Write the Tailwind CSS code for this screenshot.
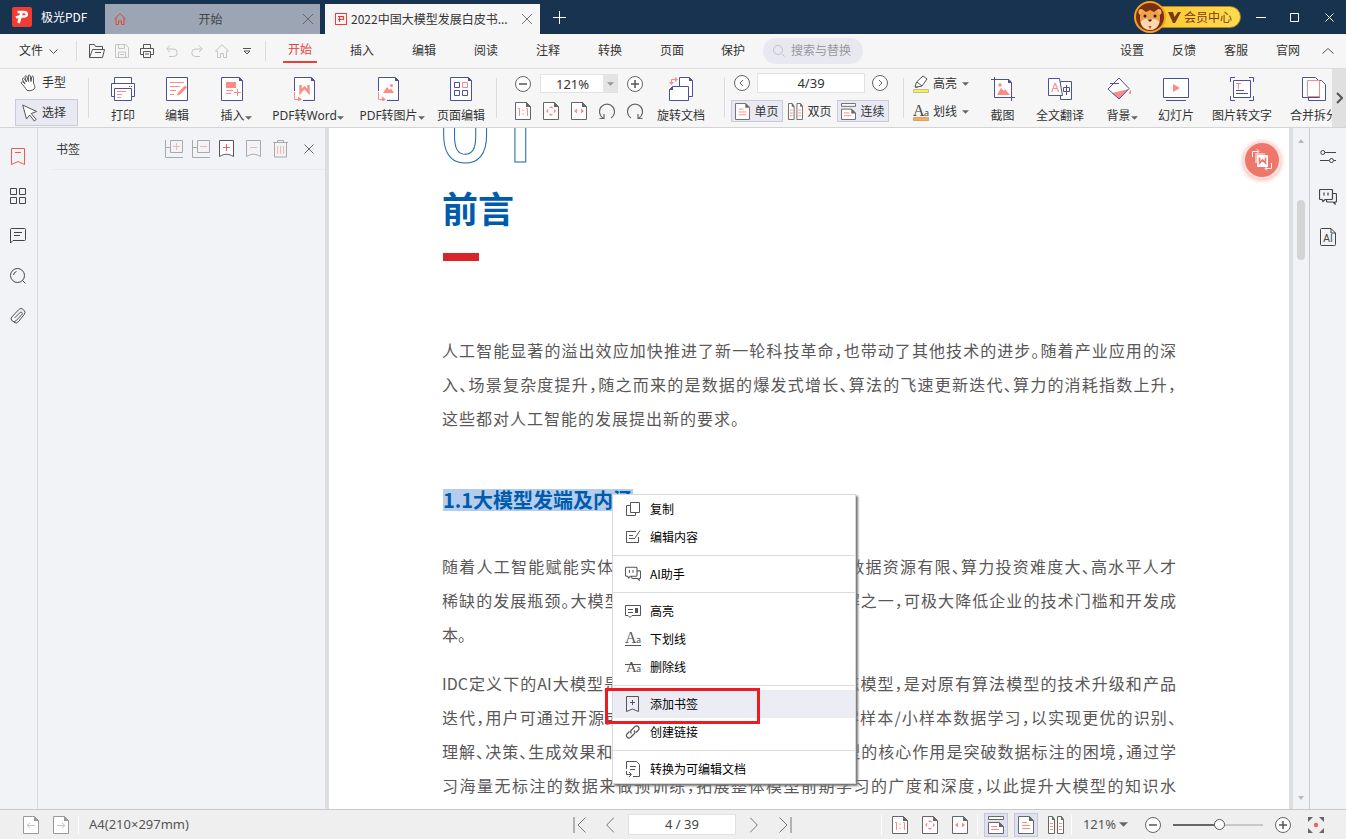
<!DOCTYPE html>
<html lang="zh-CN">
<head>
    <meta charset="UTF-8">
    <meta name="viewport" content="width=device-width, initial-scale=1.0">
    <title>极光PDF</title>
    <script src="https://cdn.jsdelivr.net/npm/@tailwindcss/browser@4"></script>
    <style>
        .ui { font-family: "Noto Sans", "Noto Sans CJK SC", sans-serif; }
        .cjk { font-family: "Noto Sans CJK SC", "Noto Sans", sans-serif; }
        .doc { font-family: "Noto Sans CJK SC", "Noto Sans", sans-serif; font-feature-settings: "halt"; }
        .outline-num { -webkit-text-stroke: 1px #1d66b0; color: transparent; }
        svg { fill: none; flex-shrink: 0; }
        .line { display: block; white-space: nowrap; text-align-last: justify; }
        /* zoom slider */
        .zoom { appearance: none; height: 2px; background: linear-gradient(to right, #666 52%, #c8c8c8 52%); }
        .zoom::-webkit-slider-thumb { appearance: none; width: 11px; height: 11px; border-radius: 50%; background: #fff; border: 1px solid #555; }
    </style>
</head>
<body class="ui flex h-screen flex-col overflow-hidden bg-[#f6f6f6] text-xs text-[#333]">

    <!-- Shared icons -->
    <svg class="hidden">
        <symbol id="i-page" viewBox="0 0 16 18"><path d="M.5 .5h11l4 4v13H.5z" fill="#fff" stroke="#666"/><path d="M11 0l5 5h-5z" fill="#666"/></symbol>
        <symbol id="i-actual" viewBox="0 0 16 18"><use href="#i-page"/><path d="M3 6.500h1.500V14M11 6.500h1.500V14M8 7.500v1.500M8 11.500V13" stroke="#fd8a84"/></symbol>
        <symbol id="i-fit" viewBox="0 0 16 18"><use href="#i-page"/><circle cx="8" cy="9" r="3.500" stroke="#fd8a84" stroke-dasharray="3 2.500" stroke-dashoffset="1.500"/><path d="M8 4l2 2H6zM8 14l2-2H6zM3 9l2-2v4zM13 9l-2-2v4z" fill="#fd8a84"/></symbol>
        <symbol id="i-width" viewBox="0 0 16 18"><use href="#i-page"/><path d="M3 9l3-2.500v5zM13 9l-3-2.500v5z" fill="#fd8a84"/></symbol>
        <symbol id="i-single" viewBox="0 0 16 18"><use href="#i-page"/><path d="M4 6.500h5M4 9.500h8M4 12.500h8" stroke="#fd8a84"/></symbol>
        <symbol id="i-double" viewBox="0 0 16 18"><path d="M.5 .5h4l2 3v14h-6zM9.500 .5h4l2 3v14h-6z" fill="#fff" stroke="#666"/><path d="M4 0l3 4H4zM13 0l3 4h-3z" fill="#666"/><path d="M2 7.500h3M2 10.500h3M2 13.500h3M11 7.500h3M11 10.500h3M11 13.500h3" stroke="#fd8a84"/></symbol>
        <symbol id="i-cont" viewBox="0 0 16 18"><path d="M.5 .5h15v3H.5zM.5 6.500h11l4 4v7H.5z" fill="#fff" stroke="#666"/><path d="M11 6l5 5h-5z" fill="#666"/><path d="M3 10.500h6M3 13.500h8" stroke="#fd8a84"/></symbol>
        <symbol id="i-minus" viewBox="0 0 18 18"><circle cx="9" cy="9" r="7.500" fill="#fff" stroke="#666"/><path d="M5 9h8" stroke="#555" stroke-width="1.500"/></symbol>
        <symbol id="i-plus" viewBox="0 0 18 18"><circle cx="9" cy="9" r="7.500" fill="#fff" stroke="#666"/><path d="M5 9h8M9 5v8" stroke="#555" stroke-width="1.500"/></symbol>
        <symbol id="i-caret" viewBox="0 0 8 4"><path d="M0 0h8L4 4z" fill="#666"/></symbol>
        <symbol id="i-chat" viewBox="0 0 18 16"><path d="M1.500 .5h11a1 1 0 011 1v8a1 1 0 01-1 1H6l-2 2-1-2H1.500a1 1 0 01-1-1v-8a1 1 0 011-1zM5 3.500v3M9 3.500v3M13.500 4.500h3a1 1 0 011 1v6.500a1 1 0 01-1 1h-.5v2l-2-2H8.500a1 1 0 01-1-1v-1.500" stroke="currentColor" stroke-width="1.200"/></symbol>
        <symbol id="i-convert" viewBox="0 0 24 24"><path d="M1 1h17l4 4v17H1z" fill="#fff"/><path d="M1.500 14V.5h17l3 3v20H10" stroke="#4b5196"/><path d="M18 0l4 4h-4z" fill="#4b5196"/><path d="M1.500 15v7.500H6" stroke="#fd8a84"/><path d="M5 19.500l4 3-4 2z" fill="#fd8a84"/></symbol>
    </svg>

    <!-- Title bar -->
    <header class="flex h-[34px] shrink-0 items-end bg-[#18334f]">
        <div class="flex h-full w-[105px] items-center pl-3">
            <svg class="size-5" viewBox="0 0 20 20"><rect width="20" height="20" rx="2" fill="#f03c32"/><path d="M4 10.500c3-1.500 5-1 8-1 3.500 0 4-4.500 0-4.500H5.500" stroke="#fff" stroke-width="2.600"/><path d="M9.500 6L6.500 16" stroke="#fff" stroke-width="2.800"/></svg>
            <span class="cjk ml-[9px] text-white">极光PDF</span>
        </div>
        <div class="cjk mr-[5px] flex h-[30px] w-[215px] items-center bg-[#9ba5b3] pr-[7px] pl-[9px] text-[#444]">
            <svg class="size-3" viewBox="0 0 12 12" stroke="#e5423a"><path d="M.5 6L6 .7 11.500 6M2 5v6.500h2.500V8h3v3.500H10V5"/></svg>
            <span class="flex-1 pr-2 text-center">开始</span>
            <button aria-label="关闭开始"><svg class="size-[10px]" viewBox="0 0 10 10" stroke="#666"><path d="M0 0l10 10M10 0L0 10"/></svg></button>
        </div>
        <div class="cjk flex h-[30px] w-[215px] items-center bg-[#f6f6f6] pr-2 pl-[10px]">
            <svg class="size-3" viewBox="0 0 12 12"><rect x=".5" y=".5" width="11" height="11" stroke="#f03c32"/><path d="M3 6.500h5.500V3.500H3M4.500 4v5" stroke="#f03c32" stroke-width="1.200"/></svg>
            <span class="ml-1 flex-1 whitespace-nowrap">2022中国大模型发展白皮书...</span>
            <button aria-label="关闭文档"><svg class="size-[10px]" viewBox="0 0 10 10" stroke="#777"><path d="M0 0l10 10M10 0L0 10"/></svg></button>
        </div>
        <button class="ml-[13px] flex h-full items-center" aria-label="新建标签"><svg class="size-[13px]" viewBox="0 0 13 13" stroke="#fff"><path d="M6.500 0v13M0 6.500h13"/></svg></button>
        <div class="ml-auto flex h-full items-center pr-3 text-white">
            <button class="cjk relative mr-[15px] flex h-[22px] w-[98px] items-center rounded-full border border-[#b9861d] bg-linear-to-r from-[#fbc62e] to-[#ffdc50] pl-6 text-[#7c3a12]">
                <svg class="absolute -left-[10px] size-8" viewBox="0 0 32 32">
                    <circle cx="16" cy="16" r="15" fill="#7d2f0d" stroke="#f0a51e" stroke-width="2"/>
                    <circle cx="7.500" cy="11" r="3" fill="#f8b25c"/><circle cx="24.500" cy="11" r="3" fill="#f8b25c"/>
                    <path d="M6 17c0-7 4-9 10-9s10 2 10 9-4 12-10 12S6 24 6 17z" fill="#f2a04a"/>
                    <path d="M6.500 21c2-2 5-4 9.500-3 4.500-1 7.500 1 9.500 3-1 5-5 8-9.500 8s-8.500-3-9.500-8z" fill="#fbd9b0"/>
                    <path d="M8 8l4-3 4 3 4-3 4 3-4 3-4-2-4 2z" fill="#7d2f0d"/>
                    <circle cx="11" cy="15" r="1.500" fill="#222"/><circle cx="21" cy="15" r="1.500" fill="#222"/>
                    <path d="M13.500 18.500h5L16 21z" fill="#4a1c08"/><path d="M14.500 25h3L16 28z" fill="#e5322c"/>
                </svg>
                <svg class="mr-[3px] h-[11px] w-[13px]" viewBox="0 0 13 11"><path d="M0 0h5l1.500 5L10 0h3L7 11H5z" fill="#7c3a12"/></svg>
                会员中心
            </button>
            <button class="mr-6" aria-label="最小化"><svg class="size-[10px]" viewBox="0 0 10 10" stroke="#fff"><path d="M0 5.500h10"/></svg></button>
            <button class="mr-[26px]" aria-label="最大化"><svg class="size-[9px]" viewBox="0 0 9 9" stroke="#fff"><path d="M.5 .5h8v8h-8z"/></svg></button>
            <button aria-label="关闭"><svg class="size-[9px]" viewBox="0 0 9 9" stroke="#fff"><path d="M.5 .5l8 8M8.500 .5l-8 8"/></svg></button>
        </div>
    </header>

    <!-- Menu bar -->
    <nav class="flex h-[35px] shrink-0 items-center border-b border-[#dcdcdc] leading-4">
        <button class="ml-[19px] flex items-center gap-[6px]">文件<svg class="h-[5px] w-[9px]" viewBox="0 0 9 5" stroke="#555"><path d="M.5 .5l4 4 4-4"/></svg></button>
        <div class="ml-[18px] h-5 w-px bg-[#dcdcdc]"></div>
        <div class="ml-[7px] flex w-[175px] items-center justify-between">
            <button class="flex w-[25px] justify-center" aria-label="打开"><svg class="size-4" viewBox="0 0 16 16" stroke="#555"><path d="M.5 14.500V1.500h5l1 2h7v3M.5 14.500l3-8h12l-2 8zM6 9.500h6"/></svg></button>
            <button class="flex w-[25px] justify-center" aria-label="保存"><svg class="size-[14px]" viewBox="0 0 14 14" stroke="#c4c4c4"><path d="M.5 .5h10l3 3v10H.5zM3.500 .5v4h6v-4M3.500 13v-5h7v5M5 10.500h4"/></svg></button>
            <button class="flex w-[25px] justify-center" aria-label="打印文件"><svg class="size-[14px]" viewBox="0 0 14 14" stroke="#555"><path d="M3.500 4V.5h7V4M3 10.500H.5v-6h13v6H11M3.500 7.500h7v6h-7zM5 10h4"/></svg></button>
            <button class="flex w-[25px] justify-center" aria-label="撤销"><svg class="size-3" viewBox="0 0 12 12" stroke="#c4c4c4"><path d="M4 .5L.7 4 4 7M1 4h6.500a3.700 3.700 0 010 7.500H3"/></svg></button>
            <button class="flex w-[25px] justify-center" aria-label="重做"><svg class="size-3" viewBox="0 0 12 12" stroke="#c4c4c4"><path d="M8 .5L11.300 4 8 7M11 4H4.500a3.700 3.700 0 000 7.500H9"/></svg></button>
            <button class="flex w-[25px] justify-center" aria-label="主页"><svg class="size-[14px]" viewBox="0 0 14 14" stroke="#c4c4c4"><path d="M.5 7L7 .7 13.500 7H11.500v6.500h-3v-4h-3v4h-3V7z"/></svg></button>
            <button class="flex w-[25px] justify-center" aria-label="更多"><svg class="h-[7px] w-2" viewBox="0 0 8 7" stroke="#555"><path d="M0 .5h8M1 3l3 3 3-3z"/></svg></button>
        </div>
        <div class="ml-[6px] h-5 w-px bg-[#dcdcdc]"></div>
        <div class="ml-[3px] flex h-full items-center">
            <button class="flex w-[62px] justify-center text-[#e5423a]"><span class="w-[34px] border-b-2 border-[#e5423a] pt-[3px] pb-[3px]">开始</span></button>
            <button class="w-[62px]">插入</button>
            <button class="w-[62px]">编辑</button>
            <button class="w-[62px]">阅读</button>
            <button class="w-[62px]">注释</button>
            <button class="w-[62px]">转换</button>
            <button class="w-[62px]">页面</button>
            <button class="w-[60px]">保护</button>
        </div>
        <label class="flex h-[26px] w-[100px] items-center gap-[6px] rounded-full bg-[#e8e8f1] pl-[10px]">
            <svg class="size-3" viewBox="0 0 12 12" stroke="#c0c0c8"><circle cx="5" cy="5" r="4.500"/><path d="M8.500 8.500l3 3"/></svg>
            <input class="w-16 outline-none placeholder:text-[#999]" type="text" placeholder="搜索与替换" aria-label="搜索与替换">
        </label>
        <div class="ml-auto flex items-center pr-3">
            <button class="w-[52px]">设置</button>
            <button class="w-[52px]">反馈</button>
            <button class="w-[52px]">客服</button>
            <button class="w-[52px]">官网</button>
            <button class="ml-2" aria-label="收起"><svg class="h-[6px] w-3" viewBox="0 0 12 6" stroke="#555"><path d="M.5 5.500L6 .5l5.500 5"/></svg></button>
        </div>
    </nav>

    <!-- Ribbon -->
    <section class="flex h-[59px] shrink-0 overflow-hidden border-b border-[#d4d4d4]">
        <div class="flex min-w-0 flex-1 overflow-hidden">
            <div class="ml-[15px] flex w-[63px] shrink-0 flex-col gap-[3px] pt-[1px]">
                <button class="flex h-[26px] items-center gap-1 pl-[5px]">
                    <svg class="size-[18px]" viewBox="0 0 18 18" stroke="#555" stroke-linejoin="round"><path d="M7 16.500C5.500 14 3 11 1.500 9.500c-1-1.200.5-2.200 1.500-1.300l2 1.600L2.500 5.500c-.6-1.300 1-2 1.700-.8L6.500 8 5 3c-.3-1.400 1.300-1.800 1.800-.5L8.500 7.500 8.300 2c0-1.400 1.700-1.400 1.900 0l.8 5.500L11.700 3c.2-1.300 1.700-1.100 1.700.2l.1 5.800c.5 2 2.500 4.500.5 6-1.500 1.500-4 2-7 1.500z" fill="#fff"/></svg>
                    手型
                </button>
                <button class="flex h-[27px] items-center gap-1 border border-[#c9cade] bg-[#e9e9f3] pl-[6px]">
                    <svg class="h-[18px] w-4" viewBox="0 0 16 18"><path d="M.7 1l14 6.500-5.500 2 5 6-2 1.500-4.500-6L4.500 15z" fill="#fff" stroke="#555" stroke-linejoin="round"/></svg>
                    选择
                </button>
            </div>
            <div class="mt-[9px] ml-[10px] h-10 w-px shrink-0 bg-[#dcdcdc]"></div>

            <button class="ml-[7px] flex w-[54px] shrink-0 flex-col items-center pt-2">
                <svg class="size-6" viewBox="0 0 24 24" stroke="#4b5196"><path d="M3.500 6V.5h17V6" fill="#fff"/><path d="M.5 6.500h23v13H.5z" fill="#fff"/><path d="M3.500 11.500h17v12h-17z" fill="#fff"/><path d="M18 9.500h1M20 9.500h1"/><path d="M6 14.500h9M6 17.500h5M6 20.500h4" stroke="#fd8a84"/></svg>
                <span class="mt-[5px] leading-5">打印</span>
            </button>
            <button class="flex w-[54px] shrink-0 flex-col items-center pt-2">
                <svg class="size-6" viewBox="0 0 24 24"><path d="M1.500 .5h21v23h-21z" fill="#fff" stroke="#4b5196"/><path d="M5 5.500h14M5 9.500h10M5 13.500h6M5 17.500h4" stroke="#fd8a84"/><path d="M12 18.500l1-3 7-7 2 2-7 7z" fill="#fd8a84"/></svg>
                <span class="mt-[5px] leading-5">编辑</span>
            </button>
            <button class="flex w-16 shrink-0 flex-col items-center pt-2">
                <svg class="mr-2 size-6" viewBox="0 0 24 24"><path d="M1.500 .5h18l3 3v20h-21z" fill="#fff" stroke="#4b5196"/><path d="M19 0l4 4h-4z" fill="#4b5196"/><path d="M6 5h10v6H6z" fill="#fd8a84"/><path d="M6 13.500h7M6 16.500h5M14 15.500h7M17.500 12v7" stroke="#fd8a84"/></svg>
                <span class="mt-[5px] flex items-center leading-5">插入<svg class="mt-[3px] h-[4px] w-[7px]"><use href="#i-caret"/></svg></span>
            </button>
            <button class="flex w-20 shrink-0 flex-col items-center pt-2">
                <svg class="mr-[6px] size-6" viewBox="0 0 24 24"><use href="#i-convert"/><path d="M7.500 8v7l4-4.500 4 4.500V8" stroke="#fd8a84" stroke-width="2.400"/></svg>
                <span class="mt-[5px] flex items-center whitespace-nowrap leading-5">PDF转Word<svg class="mt-[3px] h-[4px] w-[7px]"><use href="#i-caret"/></svg></span>
            </button>
            <button class="flex w-[88px] shrink-0 flex-col items-center pt-2">
                <svg class="mr-[6px] size-6" viewBox="0 0 24 24"><use href="#i-convert"/><path d="M6 16l4-6 2.500 3 1.500-1.500L17 16z" fill="#fd8a84"/><circle cx="14.500" cy="8.500" r="1.500" fill="#fd8a84"/></svg>
                <span class="mt-[5px] flex items-center whitespace-nowrap leading-5">PDF转图片<svg class="mt-[3px] h-[4px] w-[7px]"><use href="#i-caret"/></svg></span>
            </button>
            <button class="flex w-[50px] shrink-0 flex-col items-center whitespace-nowrap pt-2">
                <svg class="size-6" viewBox="0 0 24 24"><path d="M1.500 .5h18l3 3v20h-21z" fill="#fff" stroke="#4b5196"/><path d="M19 0l4 4h-4z" fill="#4b5196"/><path d="M5.500 5.500h5v5h-5zM5.500 13.500h5v5h-5zM13.500 13.500h5v5h-5z" stroke="#4b5196"/><path d="M13.500 5.500h5v5h-5z" stroke="#fd8a84"/></svg>
                <span class="mt-[5px] leading-5">页面编辑</span>
            </button>
            <div class="mt-[9px] ml-[10px] h-10 w-px shrink-0 bg-[#dcdcdc]"></div>

            <!-- Zoom -->
            <div class="ml-3 flex w-[140px] shrink-0 flex-col gap-[9px] pt-[5px]">
                <div class="flex items-center justify-between px-[5px]">
                    <button aria-label="缩小"><svg class="size-[18px]"><use href="#i-minus"/></svg></button>
                    <div class="relative flex h-[19px] w-[78px] items-center border border-[#e2e2e2] bg-white">
                        <select class="h-full w-full appearance-none pl-[15px] text-[13px] leading-4 outline-none" aria-label="缩放比例"><option>121%</option><option>100%</option></select>
                        <span class="pointer-events-none absolute inset-y-0 right-0 flex w-[14px] items-center justify-center bg-[#e4e4e4]"><svg class="h-[4px] w-[7px] opacity-60"><use href="#i-caret"/></svg></span>
                    </div>
                    <button aria-label="放大"><svg class="size-[18px]"><use href="#i-plus"/></svg></button>
                </div>
                <div class="flex items-center justify-between px-[6px]">
                    <button aria-label="实际大小"><svg class="h-[18px] w-4"><use href="#i-actual"/></svg></button>
                    <button aria-label="适合页面"><svg class="h-[18px] w-4"><use href="#i-fit"/></svg></button>
                    <button aria-label="适合宽度"><svg class="h-[18px] w-4"><use href="#i-width"/></svg></button>
                    <button aria-label="向左旋转"><svg class="h-[18px] w-4" viewBox="0 0 16 18" stroke="#666" stroke-width="1.200"><path d="M12 16a7.500 7.500 0 10-8 0M.5 16.500H5V12"/></svg></button>
                    <button aria-label="向右旋转"><svg class="h-[18px] w-4" viewBox="0 0 16 18" stroke="#666" stroke-width="1.200"><path d="M4 16a7.500 7.500 0 118 0M15.500 16.500H11V12"/></svg></button>
                </div>
            </div>
            <button class="ml-1 flex w-14 shrink-0 flex-col items-center whitespace-nowrap pt-2">
                <svg class="size-6" viewBox="0 0 24 24"><path d="M10.500 .5h10l3 3v16h-13z" fill="#fff" stroke="#4b5196"/><path d="M20 0l4 4h-4z" fill="#4b5196"/><path d="M.5 12.500l3-3h16v14H.5z" fill="#fff" stroke="#4b5196"/><path d="M4 9v4H0z" fill="#4b5196"/><path d="M2.500 7V2.500H7" stroke="#fd8a84"/><path d="M0 5h5l-2.500 3zM6 0v5l3-2.500z" fill="#fd8a84"/></svg>
                <span class="mt-[5px] leading-5">旋转文档</span>
            </button>
            <div class="mt-[9px] ml-[15px] h-10 w-px shrink-0 bg-[#dcdcdc]"></div>

            <!-- Page navigation and view mode -->
            <div class="ml-[6px] flex w-[158px] shrink-0 flex-col gap-[7px] pt-1">
                <div class="flex items-center justify-between pl-[2px]">
                    <button aria-label="上一页"><svg class="size-[18px]" viewBox="0 0 18 18" stroke="#666"><circle cx="9" cy="9" r="7.500" fill="#fff"/><path d="M10 6L7 9l3 3"/></svg></button>
                    <input class="h-5 w-[108px] border border-[#e2e2e2] bg-white text-center text-[13px] outline-none" type="text" value="4/39" aria-label="页码">
                    <button aria-label="下一页"><svg class="size-[18px]" viewBox="0 0 18 18" stroke="#666"><circle cx="9" cy="9" r="7.500" fill="#fff"/><path d="M8 6l3 3-3 3"/></svg></button>
                </div>
                <div class="cjk flex items-center justify-between">
                    <button class="flex h-[22px] w-[52px] items-center justify-center gap-1 border border-[#c9cade] bg-[#e9e9f3]"><svg class="h-[17px] w-[15px]"><use href="#i-single"/></svg>单页</button>
                    <button class="flex h-[22px] w-[48px] items-center justify-center gap-1"><svg class="h-[17px] w-[15px]"><use href="#i-double"/></svg>双页</button>
                    <button class="flex h-[22px] w-[52px] items-center justify-center gap-1 border border-[#c9cade] bg-[#e9e9f3]"><svg class="h-[17px] w-[15px]"><use href="#i-cont"/></svg>连续</button>
                </div>
            </div>
            <div class="mt-[9px] ml-[14px] h-10 w-px shrink-0 bg-[#dcdcdc]"></div>

            <div class="ml-[9px] flex w-[57px] shrink-0 flex-col gap-[10px] pt-[6px]">
                <button class="flex h-[18px] items-center gap-1">
                    <svg class="h-[18px] w-4" viewBox="0 0 16 18"><path d="M2 12l1.500-5L10 1l4 3-5 7-5 1z" fill="#fff" stroke="#555"/><path d="M4 7l5 4M2 12h3" stroke="#555"/><path d="M.5 14.500h15v3H.5z" fill="#fdf23c" stroke="#c0c0a0"/></svg>
                    高亮<svg class="ml-px h-[4px] w-[7px]"><use href="#i-caret"/></svg>
                </button>
                <button class="flex h-[18px] items-center gap-1">
                    <svg class="h-[18px] w-4" viewBox="0 0 16 18"><text x="0" y="13" font-family="Liberation Serif" font-size="16" fill="#444">A</text><text x="11" y="13" font-size="9" fill="#444">a</text><path d="M.5 14.500h15v3H.5z" fill="#ffab4a" stroke="#c9a67c"/></svg>
                    划线<svg class="ml-px h-[4px] w-[7px]"><use href="#i-caret"/></svg>
                </button>
            </div>
            <button class="ml-1 flex w-[57px] shrink-0 flex-col items-center pt-2">
                <svg class="size-6" viewBox="0 0 24 24"><path d="M3.500 2.500h14l3 3v14h-17z" fill="#fff"/><path d="M0 2.500h18l2.500 3V24M3.500 0v20.500H24" stroke="#4b5196"/><path d="M17 2l4 4h-4z" fill="#4b5196"/><path d="M6 18l4-7 3 3 1-2 5 6z" fill="#fd8a84"/><circle cx="9" cy="8" r="1.700" fill="#fd8a84"/></svg>
                <span class="mt-[5px] leading-5">截图</span>
            </button>
            <button class="flex w-[58px] shrink-0 flex-col items-center whitespace-nowrap pt-2">
                <svg class="size-6" viewBox="0 0 24 24"><path d="M12.500 4.500h11v18h-11z" fill="#fff" stroke="#4b5196"/><path d="M.5 1.500h11l3 17H.5z" fill="#fff" stroke="#4b5196"/><text x="3" y="15" font-size="13" fill="#fd8a84">A</text><path d="M15.500 10.500h6v4h-6zM18.500 8v10" stroke="#4b5196"/></svg>
                <span class="mt-[5px] leading-5">全文翻译</span>
            </button>
            <button class="flex w-[66px] shrink-0 flex-col items-center pt-2">
                <svg class="mr-[6px] size-6" viewBox="0 0 24 24"><path d="M1 12L12 1l10 11-10 10z" fill="#fff"/><path d="M5 16l17-4-10 10z" fill="#fd8a84"/><path d="M1 12L12 1l10 10.500L12 22zM3 6.500h9" stroke="#4b5196"/><path d="M23.500 13c1 2 1 4-.5 4s-1-2 .5-4z" fill="#fd8a84"/></svg>
                <span class="mt-[5px] flex items-center leading-5">背景<svg class="mt-[3px] h-[4px] w-[7px]"><use href="#i-caret"/></svg></span>
            </button>
            <button class="flex w-[42px] shrink-0 flex-col items-center whitespace-nowrap pt-2">
                <svg class="h-6 w-[26px]" viewBox="0 0 26 24"><path d="M.5 1.500h25v19H.5z" fill="#fff" stroke="#4b5196"/><path d="M3 23.500h20" stroke="#4b5196"/><path d="M10 7l7 4-7 4z" fill="#fd8a84"/></svg>
                <span class="mt-[5px] leading-5">幻灯片</span>
            </button>
            <button class="flex w-[90px] shrink-0 flex-col items-center whitespace-nowrap pt-2">
                <svg class="size-6" viewBox="0 0 24 24"><path d="M3.500 3.500h17v17h-17z" fill="#fff"/><path d="M.5 5V.5H5M19 .5h4.500V5M23.500 19v4.500H19M5 23.500H.5V19M3.500 3.500h17v17h-17zM6 13.500h8M6 16.500h12" stroke="#4b5196"/><path d="M6 6.500h5M8.500 6v6" stroke="#fd8a84"/></svg>
                <span class="mt-[5px] leading-5">图片转文字</span>
            </button>
            <button class="flex w-[54px] shrink-0 flex-col items-center whitespace-nowrap pt-2">
                <svg class="size-6" viewBox="0 0 24 24"><path d="M6.500 3.500h13l4 4v16h-17z" fill="#fff" stroke="#4b5196"/><path d="M.5 .5h13l4 4v16H.5z" fill="#fff" stroke="#4b5196"/><path d="M5.500 3.500h12v16h-12z" stroke="#fd8a84"/></svg>
                <span class="mt-[5px] leading-5">合并拆分</span>
            </button>
        </div>
        <button class="flex w-[14px] shrink-0 items-center justify-center bg-[#e0e0e0]" aria-label="更多工具"><svg class="h-3 w-[7px]" viewBox="0 0 7 12" stroke="#555" stroke-width="2"><path d="M1 1l5 5-5 5"/></svg></button>
    </section>

    <!-- Workspace -->
    <div class="flex min-h-0 flex-1 bg-[#f2f3f6]">
        <aside class="flex w-[38px] shrink-0 flex-col border-r border-[#d8d9db] pt-2 text-[#444]">
            <button class="flex h-10 items-center justify-center pr-[2px]" aria-label="书签"><svg class="h-[17px] w-[14px]" viewBox="0 0 14 17" stroke="#f05a50"><path d="M.5 .5h13v16L7 13.500.5 16.500zM4 4.500h6"/></svg></button>
            <button class="flex h-10 items-center justify-center pr-[2px]" aria-label="缩略图"><svg class="size-4" viewBox="0 0 16 16" stroke="currentColor"><path d="M.5 .5h6v6h-6zM9.500 .5h6v6h-6zM.5 9.500h6v6h-6zM9.500 9.500h6v6h-6z"/></svg></button>
            <button class="flex h-10 items-center justify-center pr-[2px]" aria-label="注释列表"><svg class="size-4" viewBox="0 0 16 16" stroke="currentColor"><path d="M.5 15V1.500a1 1 0 011-1h13a1 1 0 011 1v10a1 1 0 01-1 1H3zM4 4.500h8M4 7.500h6"/></svg></button>
            <button class="flex h-10 items-center justify-center pr-[2px]" aria-label="查找"><svg class="size-4" viewBox="0 0 16 16" stroke="currentColor"><circle cx="7.500" cy="7.500" r="7"/><path d="M12.500 12.500l3 3M3.500 7a4 4 0 013-3.500"/></svg></button>
            <button class="flex h-10 items-center justify-center pr-[2px]" aria-label="附件"><svg class="size-4" viewBox="0 0 16 17" stroke="currentColor"><path d="M4.500 10.500l6-6a1.500 1.500 0 012 2l-6.500 7a3 3 0 01-4.500-4l7-7.500a3.500 3.500 0 015.500 0 3.500 3.500 0 01.5 5l-6 7.500a3.500 3.500 0 01-5 .5"/></svg></button>
        </aside>

        <!-- Bookmark panel -->
        <aside class="w-[287px] shrink-0">
            <div class="ml-[15px] flex h-[42px] items-center border-b border-[#e8e9eb] pl-[3px]">
                <h2 class="cjk flex-1">书签</h2>
                <div class="flex items-center gap-[9px] pr-[11px]">
                    <button aria-label="添加子书签"><svg class="size-[18px]" viewBox="0 0 18 18" stroke="#a9a9a9"><path d="M.5 0v17.500H18M.5 7.500H5M5.500 .5h12v12h-12z"/><path d="M8 6.500h7M11.500 3v7" stroke="#f7b5b1"/></svg></button>
                    <button aria-label="收起书签"><svg class="size-[18px]" viewBox="0 0 18 18" stroke="#a9a9a9"><path d="M.5 0v17.500H18M.5 7.500H5M5.500 .5h12v12h-12z"/><path d="M8 6.500h7" stroke="#f7b5b1"/></svg></button>
                    <button aria-label="添加书签"><svg class="h-[18px] w-4" viewBox="0 0 16 18" stroke="#555"><path d="M.5 .5h14v16c-5-3-9-3-14 0z" fill="#fff"/><path d="M4 7.500h7M7.500 4v7" stroke="#f4605a"/></svg></button>
                    <button class="ml-[2px]" aria-label="删除书签"><svg class="h-[18px] w-4" viewBox="0 0 16 18" stroke="#a9a9a9"><path d="M.5 .5h14v16c-5-3-9-3-14 0z"/><path d="M4 7.500h7" stroke="#f7b5b1"/></svg></button>
                    <button class="ml-[2px]" aria-label="清空书签"><svg class="h-[18px] w-4" viewBox="0 0 16 18" stroke="#a9a9a9"><path d="M0 2.500h15M4.500 2V.5h6V2M1.500 3v14h12V3"/><path d="M4.500 6v8M7.500 6v8M10.500 6v8" stroke="#f7b5b1"/></svg></button>
                    <button class="ml-[6px]" aria-label="关闭面板"><svg class="size-[10px]" viewBox="0 0 10 10" stroke="#666"><path d="M.5 .5l9 9M9.500 .5l-9 9"/></svg></button>
                </div>
            </div>
        </aside>

        <!-- Document -->
        <main class="doc relative min-w-0 flex-1 overflow-hidden border-x-4 border-[#dcdee0] bg-white px-[113px] text-[16px] leading-[34px] text-[#595757]">
            <div class="flex h-[36px] items-end overflow-hidden"><span class="outline-num -ml-[3px] font-['Roboto'] text-[92px] leading-[66px] font-medium">01</span></div>
            <h1 class="mt-[21px] text-[36px] leading-[44px] font-bold text-[#005bac]">前言</h1>
            <div class="mt-6 ml-px h-2 w-9 bg-[#d92528]"></div>
            <p class="mt-[72px]">
                <span class="line">人工智能显著的溢出效应加快推进了新一轮科技革命，也带动了其他技术的进步。随着产业应用的深</span>
                <span class="line">入、场景复杂度提升，随之而来的是数据的爆发式增长、算法的飞速更新迭代、算力的消耗指数上升，</span>
                <span class="line w-[297px]">这些都对人工智能的发展提出新的要求。</span>
            </p>
            <h2 class="mt-[54px] ml-px flex text-[20px] leading-[22px] font-bold text-[#005bac]"><span class="bg-[#b4cdec]">1.1大模型发端及内涵</span></h2>
            <p class="mt-[38px]">
                <span class="line">随着人工智能赋能实体经济进入深水区，企业通常面临数据资源有限、算力投资难度大、高水平人才</span>
                <span class="line">稀缺的发展瓶颈。大模型凭借其优越的泛化性成为可行解之一，可极大降低企业的技术门槛和开发成</span>
                <span class="block">本。</span>
            </p>
            <p class="mt-[15px]">
                <span class="line">IDC定义下的AI大模型是基于海量多源数据打造的预训练模型，是对原有算法模型的技术升级和产品</span>
                <span class="line">迭代，用户可通过开源或开放API/工具等形式进行模型零样本/小样本数据学习，以实现更优的识别、</span>
                <span class="line">理解、决策、生成效果和更低成本的开发部署方案。大模型的核心作用是突破数据标注的困境，通过学</span>
                <span class="line">习海量无标注的数据来做预训练，拓展整体模型前期学习的广度和深度，以此提升大模型的知识水</span>
            </p>
            <button class="absolute top-[13px] right-2 flex size-[38px] items-center justify-center rounded-full border-2 border-[#fde0de] bg-[#ee766b] shadow-[0_1px_5px_#f3a9a3]" aria-label="转换为Word">
                <svg class="size-[22px]" viewBox="0 0 22 22"><path d="M4 4h10v10H4z" fill="#f7bab4"/><rect x="6" y="6" width="11" height="12" rx="1" fill="#fff"/><path d="M8.500 8.500V14l3-3 3 3V8.500" stroke="#ee766b" stroke-width="1.600"/><path d="M1.500 8V2.500H7M20.500 14v5.500H15M6 .5l2 2-2 2M16 17.500l-2 2 2 2" stroke="#fff"/></svg>
            </button>
        </main>

        <!-- Scroll bar -->
        <div class="flex w-4 shrink-0 flex-col items-center py-[9px]">
            <svg class="mt-[2px] h-[4px] w-[6px] rotate-180"><path d="M0 0h6L3 4z" fill="#b8b8b8"/></svg>
            <div class="mt-[57px] h-[60px] w-2 rounded-full bg-[#d4d4d4]"></div>
            <svg class="mt-auto h-[4px] w-[6px]"><path d="M0 0h6L3 4z" fill="#b8b8b8"/></svg>
        </div>

        <aside class="flex w-[37px] shrink-0 flex-col border-l border-[#c8c9cb] pt-[9px] text-[#444]">
            <button class="flex h-10 items-center justify-center" aria-label="属性"><svg class="h-[14px] w-4" viewBox="0 0 16 14" stroke="currentColor"><path d="M5 2.500h11M0 10.500h9M14 10.500h2"/><circle cx="2.800" cy="2.500" r="2"/><circle cx="11.500" cy="10.500" r="2"/></svg></button>
            <button class="flex h-10 items-center justify-center" aria-label="AI助手"><svg class="h-4 w-[18px]"><use href="#i-chat"/></svg></button>
            <button class="flex h-10 items-center justify-center" aria-label="AI文档"><svg class="h-[18px] w-4" viewBox="0 0 16 18"><path d="M1.500 .5H11l4.500 4.500v11.500a1 1 0 01-1 1h-13a1 1 0 01-1-1v-15a1 1 0 011-1zM11 .5V5h4.500" stroke="currentColor"/><text x="8" y="14" font-size="10" font-family="Liberation Sans" text-anchor="middle" fill="currentColor">AI</text></svg></button>
        </aside>
    </div>

    <!-- Status bar -->
    <footer class="flex h-[30px] shrink-0 items-center border-t border-[#c8c8c8] bg-[#efefef] text-[#555]">
        <div class="flex flex-1 items-center pl-[23px]">
            <button aria-label="后退"><svg class="h-[18px] w-4" viewBox="0 0 16 18"><path d="M.5 .5h11l4 4v13H.5z" fill="#fff" stroke="#999"/><path d="M11 0l5 5h-5z" fill="#999"/><path d="M4 9.500h8M7 7L4 9.500 7 12" stroke="#c4c4c4"/></svg></button>
            <button class="ml-[14px]" aria-label="前进"><svg class="h-[18px] w-4" viewBox="0 0 16 18"><path d="M.5 .5h11l4 4v13H.5z" fill="#fff" stroke="#999"/><path d="M11 0l5 5h-5z" fill="#999"/><path d="M4 9.500h8M9 7l3 2.500L9 12" stroke="#c4c4c4"/></svg></button>
            <div class="ml-[9px] h-[18px] w-px bg-white"></div>
            <span class="ml-[10px] text-[13px]">A4(210×297mm)</span>
        </div>
        <div class="flex items-center pl-[17px]">
            <button class="flex w-5 justify-center" aria-label="首页"><svg class="h-4 w-[13px]" viewBox="0 0 13 16" stroke="#777"><path d="M1 0v16M12.500 .5L5 8l7.500 7.500"/></svg></button>
            <button class="ml-[11px] flex w-5 justify-center" aria-label="前一页"><svg class="h-4 w-2" viewBox="0 0 8 16" stroke="#777"><path d="M8 .5L.7 8 8 15.500"/></svg></button>
            <input class="ml-[8px] h-[21px] w-[108px] border border-[#e0e0e0] bg-white pb-[2px] text-center text-[13px] text-[#444] outline-none" type="text" value="4 / 39" aria-label="当前页">
            <button class="ml-[8px] flex w-5 justify-center" aria-label="后一页"><svg class="h-4 w-2" viewBox="0 0 8 16" stroke="#777"><path d="M0 .5L7.300 8 0 15.500"/></svg></button>
            <button class="ml-[11px] flex w-5 justify-center" aria-label="末页"><svg class="h-4 w-[13px]" viewBox="0 0 13 16" stroke="#777"><path d="M12 0v16M.5 .5L8 8l-7.500 7.500"/></svg></button>
        </div>
        <div class="flex flex-1 items-center justify-end pr-[22px]">
            <div class="h-5 w-px bg-white"></div>
            <button class="ml-[10px]" aria-label="实际大小"><svg class="h-[18px] w-4"><use href="#i-actual"/></svg></button>
            <button class="ml-[14px]" aria-label="适合页面"><svg class="h-[18px] w-4"><use href="#i-fit"/></svg></button>
            <button class="ml-[14px]" aria-label="适合宽度"><svg class="h-[18px] w-4"><use href="#i-width"/></svg></button>
            <div class="ml-[9px] h-5 w-px bg-white"></div>
            <button class="ml-[6px] flex size-6 items-center justify-center border border-[#c3c6e0] bg-[#dfe1ef]" aria-label="连续"><svg class="h-[18px] w-4"><use href="#i-cont"/></svg></button>
            <button class="ml-[6px] flex size-6 items-center justify-center border border-[#c3c6e0] bg-[#dfe1ef]" aria-label="单页"><svg class="h-[18px] w-4"><use href="#i-single"/></svg></button>
            <button class="ml-[10px]" aria-label="双页"><svg class="h-[18px] w-4"><use href="#i-double"/></svg></button>
            <div class="ml-[7px] h-5 w-px bg-white"></div>
            <button class="ml-[11px] flex items-center gap-[3px] text-[13px]">121%<svg class="h-[5px] w-[9px]"><use href="#i-caret"/></svg></button>
            <button class="ml-4" aria-label="缩小视图"><svg class="size-[18px]"><use href="#i-minus"/></svg></button>
            <input class="zoom mx-[11px] w-[90px]" type="range" min="0" max="100" value="52" aria-label="缩放">
            <button aria-label="放大视图"><svg class="size-[18px]"><use href="#i-plus"/></svg></button>
            <button class="ml-4" aria-label="全屏"><svg class="size-4" viewBox="0 0 16 16"><path d="M0 0h5L0 5zM16 0v5l-5-5zM0 16v-5l5 5zM16 16h-5l5-5z" fill="#666"/><circle cx="8" cy="8" r="2.200" fill="#f4605a"/></svg></button>
        </div>
    </footer>

    <!-- Context menu -->
    <div class="cjk absolute top-[494px] left-[612px] w-[244px] border border-[#d8d8d8] bg-white text-black shadow-[2px_2px_2px_#777]" role="menu">
        <button class="flex h-7 w-full items-center gap-[9px] pl-3" role="menuitem"><svg class="size-4" viewBox="0 0 16 16" stroke="#555"><path d="M5.500 1.500h9v10h-9zM5 4.500H1.500v10h9V12"/></svg>复制</button>
        <button class="flex h-7 w-full items-center gap-[9px] pl-3" role="menuitem"><svg class="size-4" viewBox="0 0 16 16" stroke="#555"><path d="M11 2.500H1.500v11h12V8M4 6.500h4M4 9.500h6M15 1.500L10 9"/></svg>编辑内容</button>
        <hr class="my-1 border-[#dcdcdc]">
        <button class="flex h-7 w-full items-center gap-[9px] pl-3" role="menuitem"><svg class="size-4 text-[#555]"><use href="#i-chat"/></svg>AI助手</button>
        <hr class="my-1 border-[#dcdcdc]">
        <button class="flex h-7 w-full items-center gap-[9px] pl-3" role="menuitem"><svg class="size-4" viewBox="0 0 16 16" stroke="#555"><path d="M.5 2.500h15v10H7l-2 2-2-2H.5zM3 6.500h5M3 9.500h5"/><path d="M10 5h3v5h-3z" fill="#555" stroke="none"/></svg>高亮</button>
        <button class="flex h-7 w-full items-center gap-[9px] pl-3" role="menuitem"><svg class="size-4" viewBox="0 0 16 16"><text x="0" y="12" font-family="Liberation Serif" font-size="16" fill="#555">A</text><text x="11" y="12" font-size="9" fill="#555">a</text><path d="M0 14.500h16" stroke="#555"/></svg>下划线</button>
        <button class="flex h-7 w-full items-center gap-[9px] pl-3" role="menuitem"><svg class="size-4" viewBox="0 0 16 16"><text x="1" y="13" font-family="Liberation Serif" font-size="15" fill="#555">A</text><text x="11" y="13" font-size="9" fill="#555">a</text><path d="M0 5.500h16" stroke="#555"/></svg>删除线</button>
        <hr class="my-1 border-[#dcdcdc]">
        <button class="flex h-7 w-full items-center gap-[9px] bg-[#ececf5] pl-3" role="menuitem"><svg class="size-4" viewBox="0 0 16 16" stroke="#555"><path d="M1.500 .5h12v15L7.500 13l-6 2.500zM5 6.500h5M7.500 4v5"/></svg>添加书签</button>
        <button class="flex h-7 w-full items-center gap-[9px] pl-3" role="menuitem"><svg class="size-4" viewBox="0 0 16 16" stroke="#555" stroke-width="1.200"><path d="M6.500 9.500c-1-1-1-2.500 0-3.500L10 2.500a2.500 2.500 0 013.500 3.500L11 8.500M9 6.500c1 1 1 2.500 0 3.500L5.500 13.500A2.500 2.500 0 012 10l2.500-2.500"/></svg>创建链接</button>
        <hr class="my-1 border-[#dcdcdc]">
        <button class="flex h-7 w-full items-center gap-[9px] pl-3" role="menuitem"><svg class="size-4" viewBox="0 0 16 16" stroke="#555"><path d="M1.500 8V.5h10l3 3v12H8M5 5.500h6M5 8.500h5M1.500 10v3.500H6M4 11l2.500 2.500L4 16"/></svg>转换为可编辑文档</button>
    </div>
    <div class="pointer-events-none absolute top-[688px] left-[605px] h-9 w-[155px] border-3 border-[#ed1c24]"></div>
</body>
</html>
